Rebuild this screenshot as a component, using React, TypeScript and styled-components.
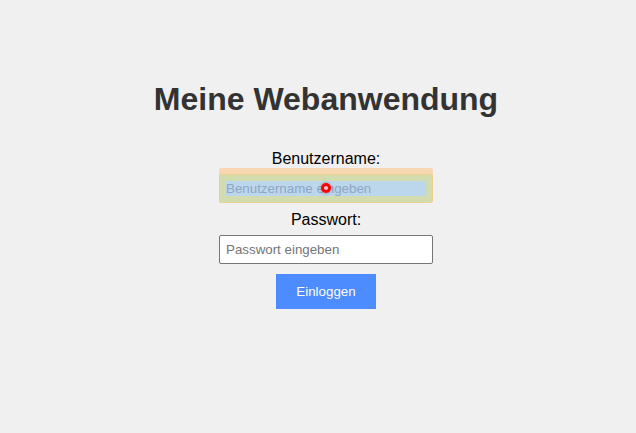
import React, { useState } from 'react';
import styled, { createGlobalStyle } from 'styled-components';

const GlobalStyle = createGlobalStyle`
  html, body {
    margin: 0;
    padding: 0;
    background-color: #f0f0f0;
    font-family: "Liberation Sans", Arial, sans-serif;
    overflow: hidden;
  }
`;

const Page = styled.div`
  display: flex;
  flex-direction: column;
  align-items: center;
  width: 636px;
  margin-left: 8px;
  padding-top: 81px;
  min-height: 433px;
  box-sizing: border-box;
`;

const Title = styled.h1`
  margin: 0 0 32px;
  color: #333;
  font-size: 32px;
  font-weight: bold;
`;

const Form = styled.form`
  display: flex;
  flex-direction: column;
  align-items: center;
`;

const Label = styled.label`
  display: block;
  font-size: 16px;
  line-height: 18px;
  color: #000;
`;

const FieldWrap = styled.div`
  position: relative;
  margin-top: 6px;
  margin-bottom: 8px;
`;

const Input = styled.input<{ $inspected?: boolean }>`
  display: block;
  width: 200px;
  padding: 6px;
  margin: 0;
  font-family: "Liberation Sans", Arial, sans-serif;
  font-size: 13.333px;
  line-height: 15px;
  color: #000;
  border: 1px solid ${(p) => (p.$inspected ? '#ecd08e' : '#767676')};
  border-radius: 2px;
  background: ${(p) =>
    p.$inspected
      ? 'linear-gradient(#bcd6ec, #bcd6ec) content-box, #d3dcae padding-box'
      : '#fff'};
  box-shadow: ${(p) => (p.$inspected ? '0 -6px 0 0 #f9d6b4' : 'none')};
  outline: none;

  &::placeholder {
    color: ${(p) => (p.$inspected ? '#8ea7c4' : '#757575')};
  }
`;

const Cursor = styled.span`
  position: absolute;
  left: 102px;
  top: 9px;
  width: 10px;
  height: 10px;
  border-radius: 50%;
  background: radial-gradient(circle, #ffc4c8 0 1.5px, #ff0000 2.5px);
  box-shadow: 0 0 3px rgba(120, 0, 0, 0.45);
  pointer-events: none;
`;

const Button = styled.button`
  width: 100px;
  height: 35px;
  margin-top: 2px;
  border: none;
  background-color: #4d8cff;
  color: #fff;
  font-family: "Liberation Sans", Arial, sans-serif;
  font-size: 13.333px;
  cursor: pointer;
`;

const App: React.FC = () => {
  const [username, setUsername] = useState('');
  const [password, setPassword] = useState('');

  return (
    <>
      <GlobalStyle />
      <Page>
        <Title>Meine Webanwendung</Title>
        <Form onSubmit={(e) => e.preventDefault()}>
          <Label htmlFor="username">Benutzername:</Label>
          <FieldWrap>
            <Input
              id="username"
              $inspected
              placeholder="Benutzername eingeben"
              value={username}
              onChange={(e) => setUsername(e.target.value)}
            />
            <Cursor />
          </FieldWrap>
          <Label htmlFor="password">Passwort:</Label>
          <FieldWrap>
            <Input
              id="password"
              type="password"
              placeholder="Passwort eingeben"
              value={password}
              onChange={(e) => setPassword(e.target.value)}
            />
          </FieldWrap>
          <Button type="submit">Einloggen</Button>
        </Form>
      </Page>
    </>
  );
};

export default App;
